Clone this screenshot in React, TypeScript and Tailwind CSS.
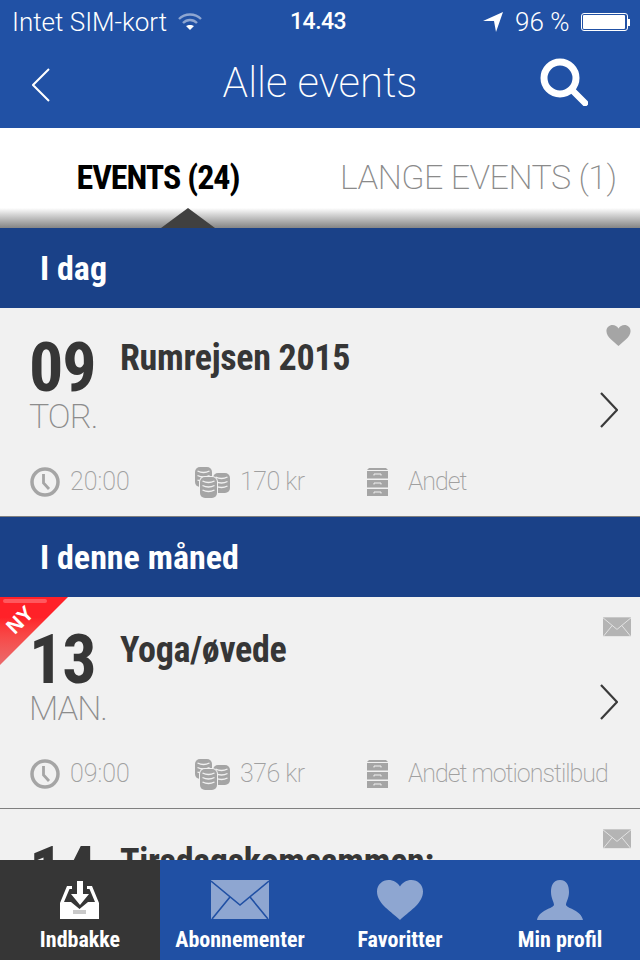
import React from 'react';

const lightFont = "font-['Roboto','Liberation_Sans',sans-serif] font-extralight";
const narrowFont = "font-['Roboto','Liberation_Sans',sans-serif] font-bold [font-stretch:75%]";

const HeartIcon = ({ className }: { className: string }) => (
    <svg viewBox="0 0 46 40" className={className} fill="currentColor">
        <path d="M23 40 C15 32 0 24 0 11.500 C0 4.500 5.500 0 11.500 0 C16.500 0 20.500 2.500 23 6.500 C25.500 2.500 29.500 0 34.500 0 C40.500 0 46 4.500 46 11.500 C46 24 31 32 23 40Z" />
    </svg>
);

const MailIcon = ({ className, line }: { className: string; line: string }) => (
    <svg viewBox="0 0 58 40" className={className}>
        <rect width="58" height="39" fill="currentColor" />
        <path d="M0 1 L29 25 L58 1 M1 39 L19 17 M57 39 L39 17" fill="none" stroke={line} strokeWidth="1.600" />
    </svg>
);

const ClockIcon = () => (
    <svg viewBox="0 0 30 30" className="w-[30px] h-[30px] text-[#a5a5a5]" fill="none" stroke="currentColor">
        <circle cx="15" cy="15" r="13" strokeWidth="3.500" />
        <path d="M13.500 7 V16 L19 22" strokeWidth="2.800" />
    </svg>
);

// one pile of coins: a solid rounded block with the coin edges cut in as pale lines
const CoinStack = ({ x, y, h }: { x: number; y: number; h: number }) => {
    const lines = [];
    for (let ly = y + 5; ly < y + h - 3; ly += 4.500) lines.push(ly);
    return (
        <g>
            <rect x={x - 1} y={y - 1} width="19" height={h + 2} rx="6" fill="#f1f1f1" />
            <rect x={x} y={y} width="17" height={h} rx="5" fill="#a5a5a5" />
            {lines.map((ly) => (
                <path key={ly} d={`M${x + 2.500} ${ly - 1} Q${x + 8.500} ${ly + 2} ${x + 14.500} ${ly - 1}`} fill="none" stroke="#f1f1f1" strokeWidth="1.300" />
            ))}
        </g>
    );
};

const CoinsIcon = () => (
    <svg viewBox="0 0 35 31" className="w-[35px] h-[31px]">
        <CoinStack x={0} y={0} h={20} />
        <CoinStack x={18} y={6} h={20} />
        <CoinStack x={5} y={10} h={21} />
    </svg>
);

const CabinetIcon = () => (
    <svg viewBox="0 0 21 28" className="w-[21px] h-[28px]" fill="#a5a5a5">
        <path d="M2 0 H19 L21 2 H0Z" />
        {[3, 12, 21].map((y) => (
            <g key={y}>
                <rect y={y} width="21" height="7.500" />
                <path d={`M7 ${y + 4.500} V${y + 3} H14 V${y + 4.500}`} fill="none" stroke="#f1f1f1" strokeWidth="1" />
            </g>
        ))}
    </svg>
);

const Chevron = () => (
    <svg viewBox="0 0 18 36" className="w-[18px] h-[36px]" fill="none" stroke="#3a3a3a" strokeWidth="2.200">
        <path d="M1 1 L17 18 L1 35" />
    </svg>
);

type EventItem = {
    day: string;
    weekday: string;
    title: string;
    time: string;
    price: string;
    category: string;
    favourite?: boolean;
    isNew?: boolean;
    top: string;
};

const EventCard = ({ item }: { item: EventItem }) => (
    <div className={`relative shrink-0 bg-[#f1f1f1] border-b border-[#808080] ${item.top}`}>
        {item.isNew && (
            <div className="absolute left-0 top-0 w-[68px] h-[68px] bg-gradient-to-b from-[#ff2128] from-30% to-[#ea6a6c] [clip-path:polygon(0_0,100%_0,0_100%)]">
                <div className="absolute left-[3px] top-[2px] w-[44px] h-[4px] rounded-full bg-white/25" />
                <span className="absolute left-0 top-[11px] w-[40px] text-center -rotate-45 text-white text-[21px] leading-[24px] font-bold font-['Liberation_Sans',sans-serif]">NY</span>
            </div>
        )}
        <div className="flex pl-[30px] pr-[9px]">
            <div className="w-[90px] shrink-0 text-[#363636]">
                <div className={`${narrowFont} text-[68px] leading-[52px] h-[52px] tracking-[-1px] -ml-[1px]`}>{item.day}</div>
                <div className={`${lightFont} text-[34px] leading-[40px] text-[#8c8c8c] mt-[2px] tracking-[-1px] -ml-[1px]`}>{item.weekday}</div>
            </div>
            <div className={`${narrowFont} flex-1 text-[36px] leading-[36px] -mt-[2px] tracking-[-0.300px] text-[#363636] whitespace-nowrap`}>{item.title}</div>
            <div className="w-[40px] shrink-0 flex flex-col items-end">
                <div className="h-[22px] -mt-[17px] mb-[45px]">
                    {item.favourite
                        ? <HeartIcon className="w-[25px] h-[21px] text-[#a5a5a5]" />
                        : <MailIcon className="w-[28px] h-[20px] text-[#b4b4b4]" line="#f1f1f1" />}
                </div>
                <div className="pr-[13px]"><Chevron /></div>
            </div>
        </div>
        <div className={`${lightFont} flex items-center h-[32px] mt-[30px] pl-[30px] text-[25px] text-[#a0a0a0]`}>
            <div className="flex items-center gap-[10px] w-[165px]"><ClockIcon />{item.time}</div>
            <div className="flex items-center gap-[10px] w-[172px] tracking-[-0.500px]"><CoinsIcon />{item.price}</div>
            <div className="flex items-center gap-[20px] whitespace-nowrap tracking-[-1px]"><CabinetIcon />{item.category}</div>
        </div>
        <div className="h-[18px]" />
    </div>
);

const SectionHeader = ({ label }: { label: string }) => (
    <div className={`${narrowFont} shrink-0 h-[80px] bg-[#1a4188] text-white text-[34px] flex items-center pl-[40px]`}>{label}</div>
);

const TabItem = ({ label, active, icon }: { label: string; active?: boolean; icon: React.ReactNode }) => (
    <div className={`w-[160px] flex flex-col items-center pt-[20px] ${active ? 'bg-[#363636]' : 'bg-[#2050a4]'}`}>
        <div className="h-[40px] flex items-center justify-center">{icon}</div>
        <div className={`${narrowFont} text-white text-[22px] leading-[30px] mt-[5px] whitespace-nowrap`}>{label}</div>
    </div>
);

const events: EventItem[] = [
    { day: '09', weekday: 'TOR.', title: 'Rumrejsen 2015', time: '20:00', price: '170 kr', category: 'Andet', favourite: true, top: 'pt-[34px]' },
    { day: '13', weekday: 'MAN.', title: 'Yoga/øvede', time: '09:00', price: '376 kr', category: 'Andet motionstilbud', isNew: true, top: 'pt-[37px]' },
];

export default function App() {
    return (
        <div className="w-[640px] h-[960px] overflow-hidden flex flex-col bg-[#f1f1f1]">
            <div className="shrink-0 h-[128px] bg-[#2151a5] text-white">
                {/* status bar */}
                <div className="font-['Roboto','Liberation_Sans',sans-serif] font-light h-[44px] flex items-center pl-[12px] pr-[8px] text-[26px]">
                    <span className="w-[153px] whitespace-nowrap">Intet SIM-kort</span>
                    <svg viewBox="0 0 24 18" className="w-[24px] h-[18px] ml-[13px] text-[#8ea6d1]" fill="none" stroke="currentColor" strokeWidth="2.400">
                        <path d="M1 6 C7 0 17 0 23 6 M5 10 C9 6 15 6 19 10" />
                        <path d="M12 17 L8 13 C10 11.500 14 11.500 16 13Z" fill="#ffffff" stroke="none" />
                    </svg>
                    <span className="ml-[88px] w-[52px] text-[23px] font-medium tracking-[-0.500px] whitespace-nowrap">14.43</span>
                    <svg viewBox="0 0 20 20" className="w-[20px] h-[20px] ml-[141px]" fill="currentColor">
                        <path d="M0 9 L20 0 L13 20 L11 9Z" />
                    </svg>
                    <span className="ml-[12px] w-[57px] whitespace-nowrap">96 %</span>
                    <div className="ml-[9px] w-[47px] h-[18px] border border-white rounded-[3px] p-[1px]"><div className="w-[42px] h-full bg-white rounded-[1px]" /></div>
                    <div className="w-[2px] h-[7px] bg-white" />
                </div>
                {/* navigation bar */}
                <div className="relative h-[84px] flex items-center justify-between pl-[32px] pr-[52px]">
                    <svg viewBox="0 0 18 34" className="w-[18px] h-[34px] mb-[2px]" fill="none" stroke="currentColor" strokeWidth="2">
                        <path d="M17 1 L1 17 L17 33" />
                    </svg>
                    <div className={`${lightFont} absolute inset-x-0 text-center text-[42px] mb-[8px]`}>Alle events</div>
                    <svg viewBox="0 0 48 48" className="w-[48px] h-[48px] mb-[8px]" fill="none" stroke="currentColor">
                        <circle cx="20" cy="20" r="16" strokeWidth="7" />
                        <path d="M32 32 L45 45" strokeWidth="6.500" strokeLinecap="round" />
                    </svg>
                </div>
            </div>
            {/* tabs */}
            <div className="relative shrink-0 h-[100px] bg-gradient-to-b from-white from-80% to-[#858585] flex">
                <div className={`${narrowFont} w-[316px] pt-[27px] text-center text-[34px] leading-[44px] tracking-[-1px] text-black whitespace-nowrap`}>EVENTS (24)</div>
                <div className={`${lightFont} flex-1 pt-[27px] pl-[24px] text-[34px] leading-[44px] tracking-[-0.500px] text-[#8a8a8a] whitespace-nowrap`}>LANGE EVENTS (1)</div>
                <div className="absolute left-[161px] bottom-0 w-[54px] h-[20px] bg-[#404040] [clip-path:polygon(50%_0,100%_100%,0_100%)]" />
            </div>
            <div className="flex-1 overflow-hidden flex flex-col">
                <SectionHeader label="I dag" />
                <EventCard item={events[0]} />
                <SectionHeader label="I denne måned" />
                <EventCard item={events[1]} />
                <EventCard item={{ day: '14', weekday: 'TIR.', title: 'Tirsdagskomsammen:', time: '19:00', price: '0 kr', category: 'Andet', top: 'pt-[37px]' }} />
            </div>
            {/* bottom tab bar */}
            <div className="shrink-0 h-[100px] flex relative">
                <TabItem
                    label="Indbakke"
                    active
                    icon={
                        <svg viewBox="0 0 40 38" className="w-[40px] h-[38px]">
                            <path d="M0 22 L7 5 H12 V8 H9.500 L4 21 H11 L19.500 28 L28 21 H35 L29.500 8 H27 V5 H32 L39 22 V38 H0Z" fill="#ffffff" />
                            <path d="M17 0 H23 V13 H29 L20 24 L11 13 H17Z" fill="#ffffff" />
                            <rect x="13" y="29" width="13" height="4" fill="#c9c9c9" />
                        </svg>
                    }
                />
                <TabItem label="Abonnementer" icon={<MailIcon className="w-[58px] h-[40px] text-[#8ea6d1]" line="#2050a4" />} />
                <TabItem label="Favoritter" icon={<HeartIcon className="w-[46px] h-[40px] text-[#8ea6d1]" />} />
                <TabItem
                    label="Min profil"
                    icon={
                        <svg viewBox="0 0 46 40" className="w-[46px] h-[40px]" fill="#8ea6d1">
                            <path d="M23 0 C30 0 32 6 32 12 C32 18 29 22 29 25 C31 29 44 30 46 40 H0 C2 30 15 29 17 25 C17 22 14 18 14 12 C14 6 16 0 23 0Z" />
                        </svg>
                    }
                />
            </div>
        </div>
    );
}
